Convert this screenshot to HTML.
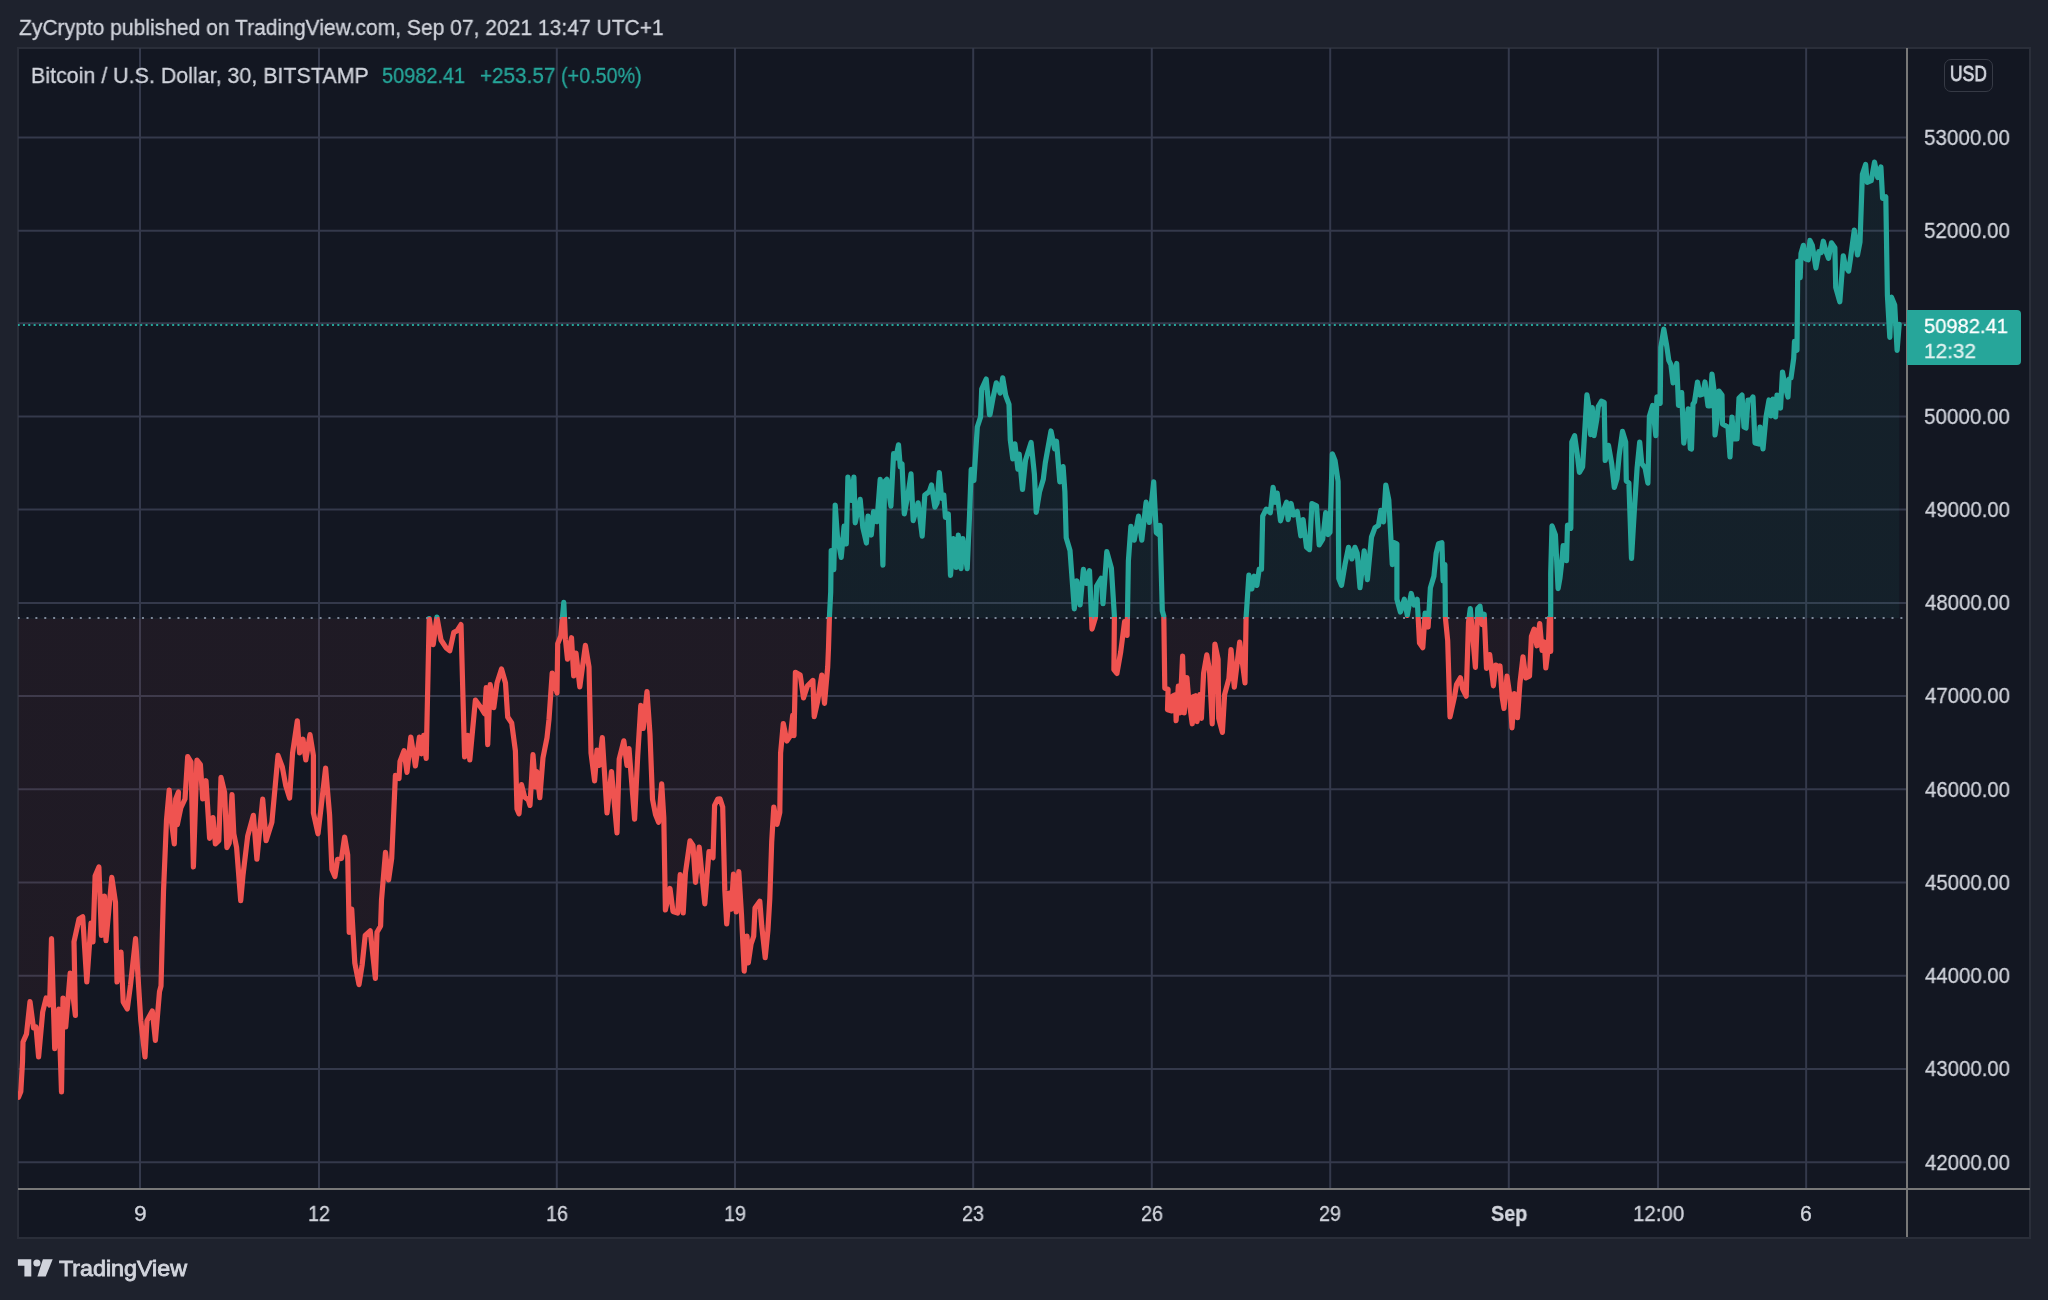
<!DOCTYPE html>
<html><head><meta charset="utf-8">
<style>
html,body{margin:0;padding:0;}
body{width:2048px;height:1300px;background:#1e222d;position:relative;overflow:hidden;font-family:"Liberation Sans",sans-serif;color:#d1d4dc;}
.t{position:absolute;line-height:1;white-space:pre;transform-origin:0 0;-webkit-text-stroke:0.3px currentColor;will-change:transform;}
.usd{position:absolute;left:1943.5px;top:59px;width:49px;height:33px;border:1.5px solid #363a45;border-radius:7px;box-sizing:border-box;}
.pbox{position:absolute;left:1907px;top:310px;width:114px;height:55px;background:#26a69a;border-radius:0 4px 4px 0;color:#fff;}
</style></head><body>
<svg width="2048" height="1300" style="position:absolute;left:0;top:0">
<defs>
<clipPath id="ctop"><rect x="18" y="48" width="1889" height="569.0"/></clipPath>
<clipPath id="cbot"><rect x="18" y="617.0" width="1889" height="571.0"/></clipPath>
<clipPath id="ftop"><rect x="18" y="48" width="1889" height="570.5"/></clipPath>
<clipPath id="fbot"><rect x="18" y="618.5" width="1889" height="569.5"/></clipPath>
<linearGradient id="gtop" x1="0" y1="48" x2="0" y2="618.0" gradientUnits="userSpaceOnUse">
<stop offset="0" stop-color="#26a69a" stop-opacity="0.07"/><stop offset="1" stop-color="#26a69a" stop-opacity="0.065"/></linearGradient>
<linearGradient id="gbot" x1="0" y1="618.0" x2="0" y2="1188" gradientUnits="userSpaceOnUse">
<stop offset="0" stop-color="#ef5350" stop-opacity="0.055"/><stop offset="1" stop-color="#ef5350" stop-opacity="0.06"/></linearGradient>
</defs>
<rect x="18" y="48" width="2012" height="1190" fill="#131722" stroke="#2a2e39" stroke-width="2"/>
<g stroke="#34394b" stroke-width="2" fill="none">
<line x1="140.0" y1="48" x2="140.0" y2="1188" />
<line x1="319.0" y1="48" x2="319.0" y2="1188" />
<line x1="556.8" y1="48" x2="556.8" y2="1188" />
<line x1="735.0" y1="48" x2="735.0" y2="1188" />
<line x1="973.2" y1="48" x2="973.2" y2="1188" />
<line x1="1151.8" y1="48" x2="1151.8" y2="1188" />
<line x1="1330.2" y1="48" x2="1330.2" y2="1188" />
<line x1="1508.8" y1="48" x2="1508.8" y2="1188" />
<line x1="1658.0" y1="48" x2="1658.0" y2="1188" />
<line x1="1806.15" y1="48" x2="1806.15" y2="1188" />
<line x1="18" y1="1162.2" x2="1907" y2="1162.2" />
<line x1="18" y1="1069.0" x2="1907" y2="1069.0" />
<line x1="18" y1="975.7" x2="1907" y2="975.7" />
<line x1="18" y1="882.6" x2="1907" y2="882.6" />
<line x1="18" y1="789.2" x2="1907" y2="789.2" />
<line x1="18" y1="696.0" x2="1907" y2="696.0" />
<line x1="18" y1="602.9" x2="1907" y2="602.9" />
<line x1="18" y1="509.6" x2="1907" y2="509.6" />
<line x1="18" y1="416.5" x2="1907" y2="416.5" />
<line x1="18" y1="323.3" x2="1907" y2="323.3" />
<line x1="18" y1="230.7" x2="1907" y2="230.7" />
<line x1="18" y1="137.6" x2="1907" y2="137.6" />
</g>
<path d="M18.5,1097.3 L20.8,1091.5 L22.5,1062.0 L23.0,1042.0 L26.5,1034.0 L30.0,1001.5 L33.5,1028.0 L36.0,1027.0 L38.6,1057.0 L42.7,1012.0 L46.1,998.0 L49.6,1005.0 L51.5,938.6 L54.7,1048.7 L58.8,1009.0 L61.5,1092.0 L63.0,998.0 L65.7,1027.0 L70.2,973.0 L75.4,1015.5 L74.0,941.8 L79.0,919.0 L82.7,916.8 L86.8,982.0 L91.0,923.0 L93.0,941.8 L95.1,876.0 L98.9,867.0 L101.4,935.5 L104.5,896.0 L106.0,940.7 L111.8,877.4 L115.5,902.3 L117.0,982.0 L121.0,952.0 L123.2,1002.0 L127.3,1009.0 L130.5,985.0 L135.6,938.6 L140.8,1020.7 L145.0,1057.0 L147.0,1020.7 L152.3,1011.0 L155.4,1040.4 L159.5,991.6 L161.0,986.0 L163.5,891.5 L166.5,820.0 L169.2,790.0 L171.5,822.0 L174.3,844.0 L175.7,799.0 L178.5,792.0 L177.3,824.6 L180.8,808.0 L185.0,799.0 L187.7,756.5 L191.0,762.0 L193.4,867.0 L196.9,760.0 L200.4,764.6 L202.7,799.0 L206.0,780.7 L209.6,838.4 L213.0,817.6 L215.4,844.0 L218.8,840.7 L221.0,777.3 L224.6,792.3 L226.9,847.6 L229.2,843.0 L232.0,794.6 L233.8,833.8 L236.6,847.6 L238.4,870.7 L240.7,900.7 L243.0,875.3 L247.7,836.0 L253.4,815.3 L256.9,859.2 L262.7,799.2 L266.1,840.7 L271.9,822.3 L278.0,755.4 L282.3,767.0 L285.7,785.4 L289.6,798.0 L292.6,753.0 L297.3,720.8 L299.6,753.0 L303.0,739.2 L305.8,760.0 L310.0,734.6 L313.4,755.4 L313.4,813.0 L318.0,833.8 L321.5,803.8 L325.6,768.0 L329.6,815.3 L331.9,869.5 L334.9,876.5 L337.6,859.2 L341.5,858.5 L344.6,837.0 L347.7,855.0 L349.2,932.3 L351.7,909.0 L354.8,963.0 L359.0,984.6 L362.2,964.6 L365.2,935.4 L370.2,930.8 L375.4,978.5 L377.0,932.3 L380.6,926.0 L381.5,900.0 L385.5,852.3 L388.6,880.0 L391.7,858.5 L395.4,775.4 L399.0,778.5 L400.0,761.5 L404.0,750.8 L407.0,772.3 L410.8,737.0 L415.4,766.0 L419.4,737.0 L421.5,753.8 L423.7,735.4 L426.2,758.5 L429.2,618.5 L433.2,644.6 L436.9,617.0 L441.0,640.0 L446.0,647.7 L449.8,650.8 L453.8,632.3 L457.0,630.8 L461.0,624.6 L463.0,698.5 L464.6,757.0 L467.7,735.4 L469.8,760.0 L475.4,700.0 L481.0,707.7 L484.6,713.8 L486.2,687.7 L487.7,744.6 L490.2,684.6 L493.8,707.7 L497.0,683.0 L501.5,669.0 L505.5,683.0 L507.7,717.0 L511.7,723.0 L515.4,750.8 L517.0,809.0 L519.0,813.8 L521.5,784.6 L524.6,797.0 L528.3,800.0 L530.0,805.4 L533.0,754.6 L535.5,787.0 L536.8,771.5 L539.8,797.7 L543.0,757.7 L547.0,737.7 L549.0,719.2 L552.2,673.0 L557.0,693.0 L557.7,643.8 L560.8,636.0 L563.8,602.3 L565.4,639.2 L567.5,659.2 L571.5,637.7 L573.7,676.0 L576.0,653.0 L579.8,687.0 L585.4,645.4 L589.0,667.0 L591.0,753.0 L594.6,780.8 L597.0,750.0 L599.2,765.4 L602.3,737.7 L607.0,813.0 L611.5,771.5 L617.0,833.0 L619.2,759.2 L623.8,740.8 L627.0,765.4 L629.0,748.5 L634.6,819.2 L637.7,756.0 L640.8,705.4 L643.2,728.5 L647.0,691.5 L650.0,734.6 L652.5,799.2 L655.5,814.6 L658.6,822.3 L661.7,783.8 L663.8,817.7 L665.4,910.0 L670.0,888.5 L673.0,911.5 L677.7,913.0 L680.2,874.6 L683.2,913.0 L685.4,873.0 L690.0,840.8 L693.0,845.4 L695.5,882.3 L699.2,847.0 L704.8,903.8 L709.0,851.5 L713.0,857.7 L714.6,805.4 L717.7,799.2 L720.0,798.9 L722.7,807.0 L724.8,890.4 L726.7,924.0 L729.4,893.0 L731.3,909.2 L733.5,874.2 L736.2,912.0 L738.8,871.6 L741.5,914.6 L744.2,971.2 L747.0,936.2 L748.3,963.0 L751.0,944.3 L753.7,936.2 L755.0,908.0 L759.8,901.2 L761.7,925.4 L765.2,957.7 L767.9,930.8 L769.8,898.5 L771.7,842.0 L773.8,807.0 L777.0,824.4 L779.8,812.3 L780.6,753.0 L783.3,723.5 L786.8,741.0 L790.5,735.6 L792.7,715.4 L794.0,735.6 L795.4,672.3 L800.2,675.0 L803.5,697.9 L807.5,685.8 L812.9,680.4 L814.2,716.7 L817.5,702.0 L821.8,675.0 L824.5,703.3 L827.7,667.0 L828.5,647.8 L829.4,617.6 L830.7,592.0 L831.2,550.7 L833.8,569.7 L835.2,505.0 L837.4,536.2 L841.2,557.4 L844.1,526.2 L846.3,544.0 L847.9,477.0 L851.2,500.5 L853.9,477.0 L855.2,522.8 L860.2,499.4 L862.8,527.3 L866.4,543.0 L868.0,516.1 L871.3,535.0 L873.5,511.7 L876.9,521.7 L880.2,479.3 L882.9,565.2 L884.7,481.6 L886.9,479.3 L890.9,506.1 L893.6,453.7 L895.8,458.1 L898.5,444.8 L900.3,467.0 L902.0,463.7 L904.3,514.0 L908.1,493.8 L911.0,473.8 L913.2,520.6 L918.1,502.8 L922.2,536.2 L924.8,495.0 L929.3,491.6 L931.5,485.0 L934.9,507.2 L937.1,502.8 L939.3,472.6 L941.6,498.3 L943.8,495.0 L945.4,517.3 L948.3,514.0 L950.5,575.3 L953.4,538.5 L956.1,567.5 L958.3,535.1 L961.0,568.6 L962.8,538.5 L967.2,568.6 L969.5,516.1 L971.2,469.3 L973.9,480.5 L977.3,427.0 L980.6,416.9 L981.7,389.0 L986.2,379.0 L989.5,414.7 L990.0,414.6 L993.0,398.0 L996.3,382.8 L1000.2,393.0 L1002.7,377.8 L1005.7,395.5 L1009.0,404.4 L1010.3,440.0 L1012.8,459.0 L1014.9,443.8 L1017.9,469.2 L1019.2,454.0 L1022.5,489.5 L1025.5,460.3 L1031.1,442.5 L1034.4,474.2 L1036.2,512.3 L1039.5,492.0 L1043.3,479.3 L1045.3,462.8 L1051.0,431.0 L1054.7,448.9 L1056.5,441.2 L1059.8,481.9 L1063.1,466.6 L1064.9,492.0 L1066.2,537.7 L1070.0,550.4 L1074.3,608.8 L1076.8,580.9 L1080.1,605.0 L1083.4,569.4 L1086.5,583.4 L1089.5,570.7 L1092.0,629.1 L1095.4,617.7 L1096.6,586.0 L1101.2,578.3 L1103.0,603.7 L1106.8,551.7 L1111.4,568.2 L1114.4,616.4 L1113.9,669.7 L1116.9,673.5 L1120.7,652.0 L1124.6,621.5 L1127.1,635.4 L1128.4,560.6 L1130.9,526.3 L1134.2,540.2 L1138.5,516.1 L1141.8,540.2 L1146.1,502.2 L1149.4,522.5 L1153.7,481.9 L1156.3,532.6 L1159.6,535.2 L1160.0,525.4 L1162.3,610.8 L1163.8,616.1 L1164.8,688.3 L1168.1,689.3 L1167.5,709.8 L1171.8,710.9 L1172.9,695.8 L1175.6,694.7 L1176.1,720.6 L1178.3,686.1 L1179.9,713.0 L1182.6,656.0 L1184.2,713.0 L1186.9,677.5 L1188.5,696.9 L1192.3,723.8 L1192.8,696.9 L1195.5,695.8 L1197.1,721.6 L1199.8,694.7 L1201.4,718.4 L1203.6,673.2 L1206.8,654.9 L1209.5,670.0 L1212.2,723.8 L1214.9,644.1 L1218.1,659.2 L1218.7,718.4 L1222.4,732.4 L1224.6,694.7 L1228.9,678.6 L1231.0,649.5 L1234.3,687.2 L1239.7,642.0 L1245.0,682.9 L1246.1,617.2 L1248.9,575.0 L1251.8,588.9 L1254.2,576.2 L1256.9,585.4 L1259.2,569.2 L1261.5,569.2 L1262.7,516.2 L1266.2,509.2 L1270.3,512.7 L1273.1,487.3 L1275.4,502.3 L1277.2,493.1 L1280.5,520.8 L1283.5,510.4 L1286.5,502.3 L1288.1,519.6 L1291.1,503.5 L1293.4,515.0 L1297.3,511.5 L1300.8,535.8 L1303.1,519.6 L1306.5,547.3 L1309.5,549.6 L1311.9,503.5 L1316.5,505.8 L1319.2,545.0 L1322.7,539.2 L1325.7,512.7 L1328.0,534.6 L1330.0,532.3 L1332.3,453.8 L1335.1,460.8 L1338.1,481.5 L1338.8,578.5 L1341.5,585.4 L1345.0,564.6 L1348.5,547.3 L1351.9,558.9 L1354.9,547.3 L1357.2,553.1 L1360.0,587.7 L1364.2,550.8 L1367.4,579.6 L1371.5,537.0 L1375.0,527.7 L1378.5,525.4 L1380.8,510.4 L1383.5,521.9 L1385.8,485.0 L1388.8,500.0 L1392.3,564.6 L1394.2,542.7 L1396.9,543.8 L1396.9,599.2 L1400.4,612.0 L1404.3,599.2 L1407.3,615.4 L1411.2,593.5 L1414.2,605.0 L1417.2,599.2 L1419.5,643.1 L1422.8,647.7 L1425.1,613.1 L1428.1,627.0 L1430.4,587.7 L1433.9,576.2 L1436.2,553.1 L1438.5,543.8 L1441.9,542.7 L1443.1,580.8 L1444.9,564.6 L1445.4,617.7 L1447.7,640.8 L1450.0,717.0 L1454.6,696.2 L1456.5,684.6 L1460.4,677.7 L1462.7,689.2 L1466.2,696.2 L1468.5,622.3 L1470.3,608.5 L1473.1,640.8 L1475.4,667.3 L1477.7,608.5 L1480.0,606.2 L1482.3,624.6 L1484.2,614.2 L1486.5,668.5 L1489.7,654.6 L1493.4,685.8 L1495.7,665.0 L1499.6,667.3 L1500.0,666.0 L1502.2,697.4 L1504.0,708.5 L1507.0,676.2 L1510.1,697.4 L1512.0,727.9 L1514.4,693.7 L1517.5,717.7 L1519.9,683.6 L1523.0,656.8 L1525.8,678.0 L1529.5,676.2 L1531.4,636.5 L1534.1,629.2 L1536.9,645.8 L1539.7,623.6 L1542.1,650.4 L1544.3,642.0 L1545.8,668.0 L1548.3,647.6 L1549.4,618.1 L1550.7,651.3 L1550.7,573.8 L1552.0,525.8 L1555.4,535.0 L1558.1,588.6 L1560.0,577.8 L1561.7,562.8 L1563.2,545.5 L1566.5,560.6 L1567.5,525.0 L1570.8,528.3 L1571.8,442.1 L1574.6,435.7 L1577.2,454.0 L1579.4,472.3 L1582.6,466.9 L1586.9,394.8 L1589.1,407.7 L1590.6,434.6 L1592.3,407.7 L1594.0,435.7 L1596.6,420.6 L1598.3,406.6 L1601.4,401.2 L1604.2,402.3 L1605.2,460.5 L1608.5,445.4 L1611.7,463.7 L1614.3,487.4 L1617.0,478.8 L1619.2,455.1 L1622.5,431.4 L1625.7,442.1 L1626.3,480.9 L1628.9,483.1 L1631.5,558.5 L1634.3,511.1 L1637.1,468.0 L1639.7,442.1 L1641.8,463.7 L1645.1,468.0 L1647.9,483.1 L1649.4,416.3 L1652.6,405.5 L1655.8,435.7 L1656.9,396.9 L1660.2,403.4 L1660.8,347.4 L1663.8,329.1 L1666.6,345.2 L1668.8,360.3 L1670.9,364.6 L1673.1,382.9 L1676.7,363.5 L1678.5,405.5 L1681.7,392.6 L1683.8,443.2 L1688.2,408.8 L1690.3,448.6 L1691.5,449.0 L1693.0,404.0 L1694.5,402.0 L1697.5,382.0 L1700.0,395.0 L1703.0,394.0 L1705.0,382.0 L1708.0,406.0 L1710.0,406.0 L1712.0,374.0 L1714.0,390.0 L1715.0,435.0 L1717.0,420.0 L1719.0,391.0 L1722.0,395.0 L1722.5,424.0 L1726.0,426.0 L1728.0,427.0 L1730.0,457.0 L1732.0,417.0 L1734.0,439.0 L1737.0,439.0 L1739.0,398.0 L1742.0,395.0 L1744.0,427.0 L1746.0,428.0 L1748.0,400.0 L1751.0,400.0 L1753.0,397.0 L1755.0,443.0 L1759.0,444.0 L1760.0,427.0 L1763.0,449.0 L1766.0,417.0 L1769.0,400.0 L1771.0,416.0 L1773.0,399.0 L1775.5,417.0 L1777.0,395.0 L1780.5,408.0 L1782.5,372.0 L1785.0,386.0 L1788.0,397.0 L1789.0,379.0 L1791.0,378.0 L1793.7,358.3 L1794.5,341.4 L1797.0,350.3 L1797.8,261.4 L1800.2,277.6 L1801.0,253.4 L1803.4,245.3 L1805.8,259.0 L1808.3,259.8 L1809.9,240.4 L1812.3,245.3 L1815.9,267.9 L1818.8,251.7 L1821.2,252.6 L1823.3,241.2 L1826.0,251.7 L1828.5,258.2 L1831.4,242.9 L1834.9,247.7 L1835.7,287.3 L1839.8,301.8 L1843.3,255.8 L1845.4,266.3 L1848.6,271.1 L1850.3,259.8 L1854.3,230.0 L1857.5,255.0 L1860.0,242.0 L1862.4,174.2 L1865.6,164.5 L1867.2,182.3 L1871.2,180.7 L1874.5,162.1 L1877.7,177.5 L1880.9,167.0 L1882.6,198.4 L1885.8,196.8 L1887.4,295.3 L1889.8,337.3 L1891.4,297.0 L1894.7,305.0 L1897.1,350.3 L1899.2,324.4 L1899.2,618.0 L18.5,618.0 Z" fill="url(#gtop)" clip-path="url(#ftop)"/>
<path d="M18.5,1097.3 L20.8,1091.5 L22.5,1062.0 L23.0,1042.0 L26.5,1034.0 L30.0,1001.5 L33.5,1028.0 L36.0,1027.0 L38.6,1057.0 L42.7,1012.0 L46.1,998.0 L49.6,1005.0 L51.5,938.6 L54.7,1048.7 L58.8,1009.0 L61.5,1092.0 L63.0,998.0 L65.7,1027.0 L70.2,973.0 L75.4,1015.5 L74.0,941.8 L79.0,919.0 L82.7,916.8 L86.8,982.0 L91.0,923.0 L93.0,941.8 L95.1,876.0 L98.9,867.0 L101.4,935.5 L104.5,896.0 L106.0,940.7 L111.8,877.4 L115.5,902.3 L117.0,982.0 L121.0,952.0 L123.2,1002.0 L127.3,1009.0 L130.5,985.0 L135.6,938.6 L140.8,1020.7 L145.0,1057.0 L147.0,1020.7 L152.3,1011.0 L155.4,1040.4 L159.5,991.6 L161.0,986.0 L163.5,891.5 L166.5,820.0 L169.2,790.0 L171.5,822.0 L174.3,844.0 L175.7,799.0 L178.5,792.0 L177.3,824.6 L180.8,808.0 L185.0,799.0 L187.7,756.5 L191.0,762.0 L193.4,867.0 L196.9,760.0 L200.4,764.6 L202.7,799.0 L206.0,780.7 L209.6,838.4 L213.0,817.6 L215.4,844.0 L218.8,840.7 L221.0,777.3 L224.6,792.3 L226.9,847.6 L229.2,843.0 L232.0,794.6 L233.8,833.8 L236.6,847.6 L238.4,870.7 L240.7,900.7 L243.0,875.3 L247.7,836.0 L253.4,815.3 L256.9,859.2 L262.7,799.2 L266.1,840.7 L271.9,822.3 L278.0,755.4 L282.3,767.0 L285.7,785.4 L289.6,798.0 L292.6,753.0 L297.3,720.8 L299.6,753.0 L303.0,739.2 L305.8,760.0 L310.0,734.6 L313.4,755.4 L313.4,813.0 L318.0,833.8 L321.5,803.8 L325.6,768.0 L329.6,815.3 L331.9,869.5 L334.9,876.5 L337.6,859.2 L341.5,858.5 L344.6,837.0 L347.7,855.0 L349.2,932.3 L351.7,909.0 L354.8,963.0 L359.0,984.6 L362.2,964.6 L365.2,935.4 L370.2,930.8 L375.4,978.5 L377.0,932.3 L380.6,926.0 L381.5,900.0 L385.5,852.3 L388.6,880.0 L391.7,858.5 L395.4,775.4 L399.0,778.5 L400.0,761.5 L404.0,750.8 L407.0,772.3 L410.8,737.0 L415.4,766.0 L419.4,737.0 L421.5,753.8 L423.7,735.4 L426.2,758.5 L429.2,618.5 L433.2,644.6 L436.9,617.0 L441.0,640.0 L446.0,647.7 L449.8,650.8 L453.8,632.3 L457.0,630.8 L461.0,624.6 L463.0,698.5 L464.6,757.0 L467.7,735.4 L469.8,760.0 L475.4,700.0 L481.0,707.7 L484.6,713.8 L486.2,687.7 L487.7,744.6 L490.2,684.6 L493.8,707.7 L497.0,683.0 L501.5,669.0 L505.5,683.0 L507.7,717.0 L511.7,723.0 L515.4,750.8 L517.0,809.0 L519.0,813.8 L521.5,784.6 L524.6,797.0 L528.3,800.0 L530.0,805.4 L533.0,754.6 L535.5,787.0 L536.8,771.5 L539.8,797.7 L543.0,757.7 L547.0,737.7 L549.0,719.2 L552.2,673.0 L557.0,693.0 L557.7,643.8 L560.8,636.0 L563.8,602.3 L565.4,639.2 L567.5,659.2 L571.5,637.7 L573.7,676.0 L576.0,653.0 L579.8,687.0 L585.4,645.4 L589.0,667.0 L591.0,753.0 L594.6,780.8 L597.0,750.0 L599.2,765.4 L602.3,737.7 L607.0,813.0 L611.5,771.5 L617.0,833.0 L619.2,759.2 L623.8,740.8 L627.0,765.4 L629.0,748.5 L634.6,819.2 L637.7,756.0 L640.8,705.4 L643.2,728.5 L647.0,691.5 L650.0,734.6 L652.5,799.2 L655.5,814.6 L658.6,822.3 L661.7,783.8 L663.8,817.7 L665.4,910.0 L670.0,888.5 L673.0,911.5 L677.7,913.0 L680.2,874.6 L683.2,913.0 L685.4,873.0 L690.0,840.8 L693.0,845.4 L695.5,882.3 L699.2,847.0 L704.8,903.8 L709.0,851.5 L713.0,857.7 L714.6,805.4 L717.7,799.2 L720.0,798.9 L722.7,807.0 L724.8,890.4 L726.7,924.0 L729.4,893.0 L731.3,909.2 L733.5,874.2 L736.2,912.0 L738.8,871.6 L741.5,914.6 L744.2,971.2 L747.0,936.2 L748.3,963.0 L751.0,944.3 L753.7,936.2 L755.0,908.0 L759.8,901.2 L761.7,925.4 L765.2,957.7 L767.9,930.8 L769.8,898.5 L771.7,842.0 L773.8,807.0 L777.0,824.4 L779.8,812.3 L780.6,753.0 L783.3,723.5 L786.8,741.0 L790.5,735.6 L792.7,715.4 L794.0,735.6 L795.4,672.3 L800.2,675.0 L803.5,697.9 L807.5,685.8 L812.9,680.4 L814.2,716.7 L817.5,702.0 L821.8,675.0 L824.5,703.3 L827.7,667.0 L828.5,647.8 L829.4,617.6 L830.7,592.0 L831.2,550.7 L833.8,569.7 L835.2,505.0 L837.4,536.2 L841.2,557.4 L844.1,526.2 L846.3,544.0 L847.9,477.0 L851.2,500.5 L853.9,477.0 L855.2,522.8 L860.2,499.4 L862.8,527.3 L866.4,543.0 L868.0,516.1 L871.3,535.0 L873.5,511.7 L876.9,521.7 L880.2,479.3 L882.9,565.2 L884.7,481.6 L886.9,479.3 L890.9,506.1 L893.6,453.7 L895.8,458.1 L898.5,444.8 L900.3,467.0 L902.0,463.7 L904.3,514.0 L908.1,493.8 L911.0,473.8 L913.2,520.6 L918.1,502.8 L922.2,536.2 L924.8,495.0 L929.3,491.6 L931.5,485.0 L934.9,507.2 L937.1,502.8 L939.3,472.6 L941.6,498.3 L943.8,495.0 L945.4,517.3 L948.3,514.0 L950.5,575.3 L953.4,538.5 L956.1,567.5 L958.3,535.1 L961.0,568.6 L962.8,538.5 L967.2,568.6 L969.5,516.1 L971.2,469.3 L973.9,480.5 L977.3,427.0 L980.6,416.9 L981.7,389.0 L986.2,379.0 L989.5,414.7 L990.0,414.6 L993.0,398.0 L996.3,382.8 L1000.2,393.0 L1002.7,377.8 L1005.7,395.5 L1009.0,404.4 L1010.3,440.0 L1012.8,459.0 L1014.9,443.8 L1017.9,469.2 L1019.2,454.0 L1022.5,489.5 L1025.5,460.3 L1031.1,442.5 L1034.4,474.2 L1036.2,512.3 L1039.5,492.0 L1043.3,479.3 L1045.3,462.8 L1051.0,431.0 L1054.7,448.9 L1056.5,441.2 L1059.8,481.9 L1063.1,466.6 L1064.9,492.0 L1066.2,537.7 L1070.0,550.4 L1074.3,608.8 L1076.8,580.9 L1080.1,605.0 L1083.4,569.4 L1086.5,583.4 L1089.5,570.7 L1092.0,629.1 L1095.4,617.7 L1096.6,586.0 L1101.2,578.3 L1103.0,603.7 L1106.8,551.7 L1111.4,568.2 L1114.4,616.4 L1113.9,669.7 L1116.9,673.5 L1120.7,652.0 L1124.6,621.5 L1127.1,635.4 L1128.4,560.6 L1130.9,526.3 L1134.2,540.2 L1138.5,516.1 L1141.8,540.2 L1146.1,502.2 L1149.4,522.5 L1153.7,481.9 L1156.3,532.6 L1159.6,535.2 L1160.0,525.4 L1162.3,610.8 L1163.8,616.1 L1164.8,688.3 L1168.1,689.3 L1167.5,709.8 L1171.8,710.9 L1172.9,695.8 L1175.6,694.7 L1176.1,720.6 L1178.3,686.1 L1179.9,713.0 L1182.6,656.0 L1184.2,713.0 L1186.9,677.5 L1188.5,696.9 L1192.3,723.8 L1192.8,696.9 L1195.5,695.8 L1197.1,721.6 L1199.8,694.7 L1201.4,718.4 L1203.6,673.2 L1206.8,654.9 L1209.5,670.0 L1212.2,723.8 L1214.9,644.1 L1218.1,659.2 L1218.7,718.4 L1222.4,732.4 L1224.6,694.7 L1228.9,678.6 L1231.0,649.5 L1234.3,687.2 L1239.7,642.0 L1245.0,682.9 L1246.1,617.2 L1248.9,575.0 L1251.8,588.9 L1254.2,576.2 L1256.9,585.4 L1259.2,569.2 L1261.5,569.2 L1262.7,516.2 L1266.2,509.2 L1270.3,512.7 L1273.1,487.3 L1275.4,502.3 L1277.2,493.1 L1280.5,520.8 L1283.5,510.4 L1286.5,502.3 L1288.1,519.6 L1291.1,503.5 L1293.4,515.0 L1297.3,511.5 L1300.8,535.8 L1303.1,519.6 L1306.5,547.3 L1309.5,549.6 L1311.9,503.5 L1316.5,505.8 L1319.2,545.0 L1322.7,539.2 L1325.7,512.7 L1328.0,534.6 L1330.0,532.3 L1332.3,453.8 L1335.1,460.8 L1338.1,481.5 L1338.8,578.5 L1341.5,585.4 L1345.0,564.6 L1348.5,547.3 L1351.9,558.9 L1354.9,547.3 L1357.2,553.1 L1360.0,587.7 L1364.2,550.8 L1367.4,579.6 L1371.5,537.0 L1375.0,527.7 L1378.5,525.4 L1380.8,510.4 L1383.5,521.9 L1385.8,485.0 L1388.8,500.0 L1392.3,564.6 L1394.2,542.7 L1396.9,543.8 L1396.9,599.2 L1400.4,612.0 L1404.3,599.2 L1407.3,615.4 L1411.2,593.5 L1414.2,605.0 L1417.2,599.2 L1419.5,643.1 L1422.8,647.7 L1425.1,613.1 L1428.1,627.0 L1430.4,587.7 L1433.9,576.2 L1436.2,553.1 L1438.5,543.8 L1441.9,542.7 L1443.1,580.8 L1444.9,564.6 L1445.4,617.7 L1447.7,640.8 L1450.0,717.0 L1454.6,696.2 L1456.5,684.6 L1460.4,677.7 L1462.7,689.2 L1466.2,696.2 L1468.5,622.3 L1470.3,608.5 L1473.1,640.8 L1475.4,667.3 L1477.7,608.5 L1480.0,606.2 L1482.3,624.6 L1484.2,614.2 L1486.5,668.5 L1489.7,654.6 L1493.4,685.8 L1495.7,665.0 L1499.6,667.3 L1500.0,666.0 L1502.2,697.4 L1504.0,708.5 L1507.0,676.2 L1510.1,697.4 L1512.0,727.9 L1514.4,693.7 L1517.5,717.7 L1519.9,683.6 L1523.0,656.8 L1525.8,678.0 L1529.5,676.2 L1531.4,636.5 L1534.1,629.2 L1536.9,645.8 L1539.7,623.6 L1542.1,650.4 L1544.3,642.0 L1545.8,668.0 L1548.3,647.6 L1549.4,618.1 L1550.7,651.3 L1550.7,573.8 L1552.0,525.8 L1555.4,535.0 L1558.1,588.6 L1560.0,577.8 L1561.7,562.8 L1563.2,545.5 L1566.5,560.6 L1567.5,525.0 L1570.8,528.3 L1571.8,442.1 L1574.6,435.7 L1577.2,454.0 L1579.4,472.3 L1582.6,466.9 L1586.9,394.8 L1589.1,407.7 L1590.6,434.6 L1592.3,407.7 L1594.0,435.7 L1596.6,420.6 L1598.3,406.6 L1601.4,401.2 L1604.2,402.3 L1605.2,460.5 L1608.5,445.4 L1611.7,463.7 L1614.3,487.4 L1617.0,478.8 L1619.2,455.1 L1622.5,431.4 L1625.7,442.1 L1626.3,480.9 L1628.9,483.1 L1631.5,558.5 L1634.3,511.1 L1637.1,468.0 L1639.7,442.1 L1641.8,463.7 L1645.1,468.0 L1647.9,483.1 L1649.4,416.3 L1652.6,405.5 L1655.8,435.7 L1656.9,396.9 L1660.2,403.4 L1660.8,347.4 L1663.8,329.1 L1666.6,345.2 L1668.8,360.3 L1670.9,364.6 L1673.1,382.9 L1676.7,363.5 L1678.5,405.5 L1681.7,392.6 L1683.8,443.2 L1688.2,408.8 L1690.3,448.6 L1691.5,449.0 L1693.0,404.0 L1694.5,402.0 L1697.5,382.0 L1700.0,395.0 L1703.0,394.0 L1705.0,382.0 L1708.0,406.0 L1710.0,406.0 L1712.0,374.0 L1714.0,390.0 L1715.0,435.0 L1717.0,420.0 L1719.0,391.0 L1722.0,395.0 L1722.5,424.0 L1726.0,426.0 L1728.0,427.0 L1730.0,457.0 L1732.0,417.0 L1734.0,439.0 L1737.0,439.0 L1739.0,398.0 L1742.0,395.0 L1744.0,427.0 L1746.0,428.0 L1748.0,400.0 L1751.0,400.0 L1753.0,397.0 L1755.0,443.0 L1759.0,444.0 L1760.0,427.0 L1763.0,449.0 L1766.0,417.0 L1769.0,400.0 L1771.0,416.0 L1773.0,399.0 L1775.5,417.0 L1777.0,395.0 L1780.5,408.0 L1782.5,372.0 L1785.0,386.0 L1788.0,397.0 L1789.0,379.0 L1791.0,378.0 L1793.7,358.3 L1794.5,341.4 L1797.0,350.3 L1797.8,261.4 L1800.2,277.6 L1801.0,253.4 L1803.4,245.3 L1805.8,259.0 L1808.3,259.8 L1809.9,240.4 L1812.3,245.3 L1815.9,267.9 L1818.8,251.7 L1821.2,252.6 L1823.3,241.2 L1826.0,251.7 L1828.5,258.2 L1831.4,242.9 L1834.9,247.7 L1835.7,287.3 L1839.8,301.8 L1843.3,255.8 L1845.4,266.3 L1848.6,271.1 L1850.3,259.8 L1854.3,230.0 L1857.5,255.0 L1860.0,242.0 L1862.4,174.2 L1865.6,164.5 L1867.2,182.3 L1871.2,180.7 L1874.5,162.1 L1877.7,177.5 L1880.9,167.0 L1882.6,198.4 L1885.8,196.8 L1887.4,295.3 L1889.8,337.3 L1891.4,297.0 L1894.7,305.0 L1897.1,350.3 L1899.2,324.4 L1899.2,618.0 L18.5,618.0 Z" fill="url(#gbot)" clip-path="url(#fbot)"/>
<g fill="none" stroke-width="5.2" stroke-linejoin="round" stroke-linecap="round">
<path d="M18.5,1097.3 L20.8,1091.5 L22.5,1062.0 L23.0,1042.0 L26.5,1034.0 L30.0,1001.5 L33.5,1028.0 L36.0,1027.0 L38.6,1057.0 L42.7,1012.0 L46.1,998.0 L49.6,1005.0 L51.5,938.6 L54.7,1048.7 L58.8,1009.0 L61.5,1092.0 L63.0,998.0 L65.7,1027.0 L70.2,973.0 L75.4,1015.5 L74.0,941.8 L79.0,919.0 L82.7,916.8 L86.8,982.0 L91.0,923.0 L93.0,941.8 L95.1,876.0 L98.9,867.0 L101.4,935.5 L104.5,896.0 L106.0,940.7 L111.8,877.4 L115.5,902.3 L117.0,982.0 L121.0,952.0 L123.2,1002.0 L127.3,1009.0 L130.5,985.0 L135.6,938.6 L140.8,1020.7 L145.0,1057.0 L147.0,1020.7 L152.3,1011.0 L155.4,1040.4 L159.5,991.6 L161.0,986.0 L163.5,891.5 L166.5,820.0 L169.2,790.0 L171.5,822.0 L174.3,844.0 L175.7,799.0 L178.5,792.0 L177.3,824.6 L180.8,808.0 L185.0,799.0 L187.7,756.5 L191.0,762.0 L193.4,867.0 L196.9,760.0 L200.4,764.6 L202.7,799.0 L206.0,780.7 L209.6,838.4 L213.0,817.6 L215.4,844.0 L218.8,840.7 L221.0,777.3 L224.6,792.3 L226.9,847.6 L229.2,843.0 L232.0,794.6 L233.8,833.8 L236.6,847.6 L238.4,870.7 L240.7,900.7 L243.0,875.3 L247.7,836.0 L253.4,815.3 L256.9,859.2 L262.7,799.2 L266.1,840.7 L271.9,822.3 L278.0,755.4 L282.3,767.0 L285.7,785.4 L289.6,798.0 L292.6,753.0 L297.3,720.8 L299.6,753.0 L303.0,739.2 L305.8,760.0 L310.0,734.6 L313.4,755.4 L313.4,813.0 L318.0,833.8 L321.5,803.8 L325.6,768.0 L329.6,815.3 L331.9,869.5 L334.9,876.5 L337.6,859.2 L341.5,858.5 L344.6,837.0 L347.7,855.0 L349.2,932.3 L351.7,909.0 L354.8,963.0 L359.0,984.6 L362.2,964.6 L365.2,935.4 L370.2,930.8 L375.4,978.5 L377.0,932.3 L380.6,926.0 L381.5,900.0 L385.5,852.3 L388.6,880.0 L391.7,858.5 L395.4,775.4 L399.0,778.5 L400.0,761.5 L404.0,750.8 L407.0,772.3 L410.8,737.0 L415.4,766.0 L419.4,737.0 L421.5,753.8 L423.7,735.4 L426.2,758.5 L429.2,618.5 L433.2,644.6 L436.9,617.0 L441.0,640.0 L446.0,647.7 L449.8,650.8 L453.8,632.3 L457.0,630.8 L461.0,624.6 L463.0,698.5 L464.6,757.0 L467.7,735.4 L469.8,760.0 L475.4,700.0 L481.0,707.7 L484.6,713.8 L486.2,687.7 L487.7,744.6 L490.2,684.6 L493.8,707.7 L497.0,683.0 L501.5,669.0 L505.5,683.0 L507.7,717.0 L511.7,723.0 L515.4,750.8 L517.0,809.0 L519.0,813.8 L521.5,784.6 L524.6,797.0 L528.3,800.0 L530.0,805.4 L533.0,754.6 L535.5,787.0 L536.8,771.5 L539.8,797.7 L543.0,757.7 L547.0,737.7 L549.0,719.2 L552.2,673.0 L557.0,693.0 L557.7,643.8 L560.8,636.0 L563.8,602.3 L565.4,639.2 L567.5,659.2 L571.5,637.7 L573.7,676.0 L576.0,653.0 L579.8,687.0 L585.4,645.4 L589.0,667.0 L591.0,753.0 L594.6,780.8 L597.0,750.0 L599.2,765.4 L602.3,737.7 L607.0,813.0 L611.5,771.5 L617.0,833.0 L619.2,759.2 L623.8,740.8 L627.0,765.4 L629.0,748.5 L634.6,819.2 L637.7,756.0 L640.8,705.4 L643.2,728.5 L647.0,691.5 L650.0,734.6 L652.5,799.2 L655.5,814.6 L658.6,822.3 L661.7,783.8 L663.8,817.7 L665.4,910.0 L670.0,888.5 L673.0,911.5 L677.7,913.0 L680.2,874.6 L683.2,913.0 L685.4,873.0 L690.0,840.8 L693.0,845.4 L695.5,882.3 L699.2,847.0 L704.8,903.8 L709.0,851.5 L713.0,857.7 L714.6,805.4 L717.7,799.2 L720.0,798.9 L722.7,807.0 L724.8,890.4 L726.7,924.0 L729.4,893.0 L731.3,909.2 L733.5,874.2 L736.2,912.0 L738.8,871.6 L741.5,914.6 L744.2,971.2 L747.0,936.2 L748.3,963.0 L751.0,944.3 L753.7,936.2 L755.0,908.0 L759.8,901.2 L761.7,925.4 L765.2,957.7 L767.9,930.8 L769.8,898.5 L771.7,842.0 L773.8,807.0 L777.0,824.4 L779.8,812.3 L780.6,753.0 L783.3,723.5 L786.8,741.0 L790.5,735.6 L792.7,715.4 L794.0,735.6 L795.4,672.3 L800.2,675.0 L803.5,697.9 L807.5,685.8 L812.9,680.4 L814.2,716.7 L817.5,702.0 L821.8,675.0 L824.5,703.3 L827.7,667.0 L828.5,647.8 L829.4,617.6 L830.7,592.0 L831.2,550.7 L833.8,569.7 L835.2,505.0 L837.4,536.2 L841.2,557.4 L844.1,526.2 L846.3,544.0 L847.9,477.0 L851.2,500.5 L853.9,477.0 L855.2,522.8 L860.2,499.4 L862.8,527.3 L866.4,543.0 L868.0,516.1 L871.3,535.0 L873.5,511.7 L876.9,521.7 L880.2,479.3 L882.9,565.2 L884.7,481.6 L886.9,479.3 L890.9,506.1 L893.6,453.7 L895.8,458.1 L898.5,444.8 L900.3,467.0 L902.0,463.7 L904.3,514.0 L908.1,493.8 L911.0,473.8 L913.2,520.6 L918.1,502.8 L922.2,536.2 L924.8,495.0 L929.3,491.6 L931.5,485.0 L934.9,507.2 L937.1,502.8 L939.3,472.6 L941.6,498.3 L943.8,495.0 L945.4,517.3 L948.3,514.0 L950.5,575.3 L953.4,538.5 L956.1,567.5 L958.3,535.1 L961.0,568.6 L962.8,538.5 L967.2,568.6 L969.5,516.1 L971.2,469.3 L973.9,480.5 L977.3,427.0 L980.6,416.9 L981.7,389.0 L986.2,379.0 L989.5,414.7 L990.0,414.6 L993.0,398.0 L996.3,382.8 L1000.2,393.0 L1002.7,377.8 L1005.7,395.5 L1009.0,404.4 L1010.3,440.0 L1012.8,459.0 L1014.9,443.8 L1017.9,469.2 L1019.2,454.0 L1022.5,489.5 L1025.5,460.3 L1031.1,442.5 L1034.4,474.2 L1036.2,512.3 L1039.5,492.0 L1043.3,479.3 L1045.3,462.8 L1051.0,431.0 L1054.7,448.9 L1056.5,441.2 L1059.8,481.9 L1063.1,466.6 L1064.9,492.0 L1066.2,537.7 L1070.0,550.4 L1074.3,608.8 L1076.8,580.9 L1080.1,605.0 L1083.4,569.4 L1086.5,583.4 L1089.5,570.7 L1092.0,629.1 L1095.4,617.7 L1096.6,586.0 L1101.2,578.3 L1103.0,603.7 L1106.8,551.7 L1111.4,568.2 L1114.4,616.4 L1113.9,669.7 L1116.9,673.5 L1120.7,652.0 L1124.6,621.5 L1127.1,635.4 L1128.4,560.6 L1130.9,526.3 L1134.2,540.2 L1138.5,516.1 L1141.8,540.2 L1146.1,502.2 L1149.4,522.5 L1153.7,481.9 L1156.3,532.6 L1159.6,535.2 L1160.0,525.4 L1162.3,610.8 L1163.8,616.1 L1164.8,688.3 L1168.1,689.3 L1167.5,709.8 L1171.8,710.9 L1172.9,695.8 L1175.6,694.7 L1176.1,720.6 L1178.3,686.1 L1179.9,713.0 L1182.6,656.0 L1184.2,713.0 L1186.9,677.5 L1188.5,696.9 L1192.3,723.8 L1192.8,696.9 L1195.5,695.8 L1197.1,721.6 L1199.8,694.7 L1201.4,718.4 L1203.6,673.2 L1206.8,654.9 L1209.5,670.0 L1212.2,723.8 L1214.9,644.1 L1218.1,659.2 L1218.7,718.4 L1222.4,732.4 L1224.6,694.7 L1228.9,678.6 L1231.0,649.5 L1234.3,687.2 L1239.7,642.0 L1245.0,682.9 L1246.1,617.2 L1248.9,575.0 L1251.8,588.9 L1254.2,576.2 L1256.9,585.4 L1259.2,569.2 L1261.5,569.2 L1262.7,516.2 L1266.2,509.2 L1270.3,512.7 L1273.1,487.3 L1275.4,502.3 L1277.2,493.1 L1280.5,520.8 L1283.5,510.4 L1286.5,502.3 L1288.1,519.6 L1291.1,503.5 L1293.4,515.0 L1297.3,511.5 L1300.8,535.8 L1303.1,519.6 L1306.5,547.3 L1309.5,549.6 L1311.9,503.5 L1316.5,505.8 L1319.2,545.0 L1322.7,539.2 L1325.7,512.7 L1328.0,534.6 L1330.0,532.3 L1332.3,453.8 L1335.1,460.8 L1338.1,481.5 L1338.8,578.5 L1341.5,585.4 L1345.0,564.6 L1348.5,547.3 L1351.9,558.9 L1354.9,547.3 L1357.2,553.1 L1360.0,587.7 L1364.2,550.8 L1367.4,579.6 L1371.5,537.0 L1375.0,527.7 L1378.5,525.4 L1380.8,510.4 L1383.5,521.9 L1385.8,485.0 L1388.8,500.0 L1392.3,564.6 L1394.2,542.7 L1396.9,543.8 L1396.9,599.2 L1400.4,612.0 L1404.3,599.2 L1407.3,615.4 L1411.2,593.5 L1414.2,605.0 L1417.2,599.2 L1419.5,643.1 L1422.8,647.7 L1425.1,613.1 L1428.1,627.0 L1430.4,587.7 L1433.9,576.2 L1436.2,553.1 L1438.5,543.8 L1441.9,542.7 L1443.1,580.8 L1444.9,564.6 L1445.4,617.7 L1447.7,640.8 L1450.0,717.0 L1454.6,696.2 L1456.5,684.6 L1460.4,677.7 L1462.7,689.2 L1466.2,696.2 L1468.5,622.3 L1470.3,608.5 L1473.1,640.8 L1475.4,667.3 L1477.7,608.5 L1480.0,606.2 L1482.3,624.6 L1484.2,614.2 L1486.5,668.5 L1489.7,654.6 L1493.4,685.8 L1495.7,665.0 L1499.6,667.3 L1500.0,666.0 L1502.2,697.4 L1504.0,708.5 L1507.0,676.2 L1510.1,697.4 L1512.0,727.9 L1514.4,693.7 L1517.5,717.7 L1519.9,683.6 L1523.0,656.8 L1525.8,678.0 L1529.5,676.2 L1531.4,636.5 L1534.1,629.2 L1536.9,645.8 L1539.7,623.6 L1542.1,650.4 L1544.3,642.0 L1545.8,668.0 L1548.3,647.6 L1549.4,618.1 L1550.7,651.3 L1550.7,573.8 L1552.0,525.8 L1555.4,535.0 L1558.1,588.6 L1560.0,577.8 L1561.7,562.8 L1563.2,545.5 L1566.5,560.6 L1567.5,525.0 L1570.8,528.3 L1571.8,442.1 L1574.6,435.7 L1577.2,454.0 L1579.4,472.3 L1582.6,466.9 L1586.9,394.8 L1589.1,407.7 L1590.6,434.6 L1592.3,407.7 L1594.0,435.7 L1596.6,420.6 L1598.3,406.6 L1601.4,401.2 L1604.2,402.3 L1605.2,460.5 L1608.5,445.4 L1611.7,463.7 L1614.3,487.4 L1617.0,478.8 L1619.2,455.1 L1622.5,431.4 L1625.7,442.1 L1626.3,480.9 L1628.9,483.1 L1631.5,558.5 L1634.3,511.1 L1637.1,468.0 L1639.7,442.1 L1641.8,463.7 L1645.1,468.0 L1647.9,483.1 L1649.4,416.3 L1652.6,405.5 L1655.8,435.7 L1656.9,396.9 L1660.2,403.4 L1660.8,347.4 L1663.8,329.1 L1666.6,345.2 L1668.8,360.3 L1670.9,364.6 L1673.1,382.9 L1676.7,363.5 L1678.5,405.5 L1681.7,392.6 L1683.8,443.2 L1688.2,408.8 L1690.3,448.6 L1691.5,449.0 L1693.0,404.0 L1694.5,402.0 L1697.5,382.0 L1700.0,395.0 L1703.0,394.0 L1705.0,382.0 L1708.0,406.0 L1710.0,406.0 L1712.0,374.0 L1714.0,390.0 L1715.0,435.0 L1717.0,420.0 L1719.0,391.0 L1722.0,395.0 L1722.5,424.0 L1726.0,426.0 L1728.0,427.0 L1730.0,457.0 L1732.0,417.0 L1734.0,439.0 L1737.0,439.0 L1739.0,398.0 L1742.0,395.0 L1744.0,427.0 L1746.0,428.0 L1748.0,400.0 L1751.0,400.0 L1753.0,397.0 L1755.0,443.0 L1759.0,444.0 L1760.0,427.0 L1763.0,449.0 L1766.0,417.0 L1769.0,400.0 L1771.0,416.0 L1773.0,399.0 L1775.5,417.0 L1777.0,395.0 L1780.5,408.0 L1782.5,372.0 L1785.0,386.0 L1788.0,397.0 L1789.0,379.0 L1791.0,378.0 L1793.7,358.3 L1794.5,341.4 L1797.0,350.3 L1797.8,261.4 L1800.2,277.6 L1801.0,253.4 L1803.4,245.3 L1805.8,259.0 L1808.3,259.8 L1809.9,240.4 L1812.3,245.3 L1815.9,267.9 L1818.8,251.7 L1821.2,252.6 L1823.3,241.2 L1826.0,251.7 L1828.5,258.2 L1831.4,242.9 L1834.9,247.7 L1835.7,287.3 L1839.8,301.8 L1843.3,255.8 L1845.4,266.3 L1848.6,271.1 L1850.3,259.8 L1854.3,230.0 L1857.5,255.0 L1860.0,242.0 L1862.4,174.2 L1865.6,164.5 L1867.2,182.3 L1871.2,180.7 L1874.5,162.1 L1877.7,177.5 L1880.9,167.0 L1882.6,198.4 L1885.8,196.8 L1887.4,295.3 L1889.8,337.3 L1891.4,297.0 L1894.7,305.0 L1897.1,350.3 L1899.2,324.4" stroke="#26a69a" clip-path="url(#ctop)"/>
<path d="M18.5,1097.3 L20.8,1091.5 L22.5,1062.0 L23.0,1042.0 L26.5,1034.0 L30.0,1001.5 L33.5,1028.0 L36.0,1027.0 L38.6,1057.0 L42.7,1012.0 L46.1,998.0 L49.6,1005.0 L51.5,938.6 L54.7,1048.7 L58.8,1009.0 L61.5,1092.0 L63.0,998.0 L65.7,1027.0 L70.2,973.0 L75.4,1015.5 L74.0,941.8 L79.0,919.0 L82.7,916.8 L86.8,982.0 L91.0,923.0 L93.0,941.8 L95.1,876.0 L98.9,867.0 L101.4,935.5 L104.5,896.0 L106.0,940.7 L111.8,877.4 L115.5,902.3 L117.0,982.0 L121.0,952.0 L123.2,1002.0 L127.3,1009.0 L130.5,985.0 L135.6,938.6 L140.8,1020.7 L145.0,1057.0 L147.0,1020.7 L152.3,1011.0 L155.4,1040.4 L159.5,991.6 L161.0,986.0 L163.5,891.5 L166.5,820.0 L169.2,790.0 L171.5,822.0 L174.3,844.0 L175.7,799.0 L178.5,792.0 L177.3,824.6 L180.8,808.0 L185.0,799.0 L187.7,756.5 L191.0,762.0 L193.4,867.0 L196.9,760.0 L200.4,764.6 L202.7,799.0 L206.0,780.7 L209.6,838.4 L213.0,817.6 L215.4,844.0 L218.8,840.7 L221.0,777.3 L224.6,792.3 L226.9,847.6 L229.2,843.0 L232.0,794.6 L233.8,833.8 L236.6,847.6 L238.4,870.7 L240.7,900.7 L243.0,875.3 L247.7,836.0 L253.4,815.3 L256.9,859.2 L262.7,799.2 L266.1,840.7 L271.9,822.3 L278.0,755.4 L282.3,767.0 L285.7,785.4 L289.6,798.0 L292.6,753.0 L297.3,720.8 L299.6,753.0 L303.0,739.2 L305.8,760.0 L310.0,734.6 L313.4,755.4 L313.4,813.0 L318.0,833.8 L321.5,803.8 L325.6,768.0 L329.6,815.3 L331.9,869.5 L334.9,876.5 L337.6,859.2 L341.5,858.5 L344.6,837.0 L347.7,855.0 L349.2,932.3 L351.7,909.0 L354.8,963.0 L359.0,984.6 L362.2,964.6 L365.2,935.4 L370.2,930.8 L375.4,978.5 L377.0,932.3 L380.6,926.0 L381.5,900.0 L385.5,852.3 L388.6,880.0 L391.7,858.5 L395.4,775.4 L399.0,778.5 L400.0,761.5 L404.0,750.8 L407.0,772.3 L410.8,737.0 L415.4,766.0 L419.4,737.0 L421.5,753.8 L423.7,735.4 L426.2,758.5 L429.2,618.5 L433.2,644.6 L436.9,617.0 L441.0,640.0 L446.0,647.7 L449.8,650.8 L453.8,632.3 L457.0,630.8 L461.0,624.6 L463.0,698.5 L464.6,757.0 L467.7,735.4 L469.8,760.0 L475.4,700.0 L481.0,707.7 L484.6,713.8 L486.2,687.7 L487.7,744.6 L490.2,684.6 L493.8,707.7 L497.0,683.0 L501.5,669.0 L505.5,683.0 L507.7,717.0 L511.7,723.0 L515.4,750.8 L517.0,809.0 L519.0,813.8 L521.5,784.6 L524.6,797.0 L528.3,800.0 L530.0,805.4 L533.0,754.6 L535.5,787.0 L536.8,771.5 L539.8,797.7 L543.0,757.7 L547.0,737.7 L549.0,719.2 L552.2,673.0 L557.0,693.0 L557.7,643.8 L560.8,636.0 L563.8,602.3 L565.4,639.2 L567.5,659.2 L571.5,637.7 L573.7,676.0 L576.0,653.0 L579.8,687.0 L585.4,645.4 L589.0,667.0 L591.0,753.0 L594.6,780.8 L597.0,750.0 L599.2,765.4 L602.3,737.7 L607.0,813.0 L611.5,771.5 L617.0,833.0 L619.2,759.2 L623.8,740.8 L627.0,765.4 L629.0,748.5 L634.6,819.2 L637.7,756.0 L640.8,705.4 L643.2,728.5 L647.0,691.5 L650.0,734.6 L652.5,799.2 L655.5,814.6 L658.6,822.3 L661.7,783.8 L663.8,817.7 L665.4,910.0 L670.0,888.5 L673.0,911.5 L677.7,913.0 L680.2,874.6 L683.2,913.0 L685.4,873.0 L690.0,840.8 L693.0,845.4 L695.5,882.3 L699.2,847.0 L704.8,903.8 L709.0,851.5 L713.0,857.7 L714.6,805.4 L717.7,799.2 L720.0,798.9 L722.7,807.0 L724.8,890.4 L726.7,924.0 L729.4,893.0 L731.3,909.2 L733.5,874.2 L736.2,912.0 L738.8,871.6 L741.5,914.6 L744.2,971.2 L747.0,936.2 L748.3,963.0 L751.0,944.3 L753.7,936.2 L755.0,908.0 L759.8,901.2 L761.7,925.4 L765.2,957.7 L767.9,930.8 L769.8,898.5 L771.7,842.0 L773.8,807.0 L777.0,824.4 L779.8,812.3 L780.6,753.0 L783.3,723.5 L786.8,741.0 L790.5,735.6 L792.7,715.4 L794.0,735.6 L795.4,672.3 L800.2,675.0 L803.5,697.9 L807.5,685.8 L812.9,680.4 L814.2,716.7 L817.5,702.0 L821.8,675.0 L824.5,703.3 L827.7,667.0 L828.5,647.8 L829.4,617.6 L830.7,592.0 L831.2,550.7 L833.8,569.7 L835.2,505.0 L837.4,536.2 L841.2,557.4 L844.1,526.2 L846.3,544.0 L847.9,477.0 L851.2,500.5 L853.9,477.0 L855.2,522.8 L860.2,499.4 L862.8,527.3 L866.4,543.0 L868.0,516.1 L871.3,535.0 L873.5,511.7 L876.9,521.7 L880.2,479.3 L882.9,565.2 L884.7,481.6 L886.9,479.3 L890.9,506.1 L893.6,453.7 L895.8,458.1 L898.5,444.8 L900.3,467.0 L902.0,463.7 L904.3,514.0 L908.1,493.8 L911.0,473.8 L913.2,520.6 L918.1,502.8 L922.2,536.2 L924.8,495.0 L929.3,491.6 L931.5,485.0 L934.9,507.2 L937.1,502.8 L939.3,472.6 L941.6,498.3 L943.8,495.0 L945.4,517.3 L948.3,514.0 L950.5,575.3 L953.4,538.5 L956.1,567.5 L958.3,535.1 L961.0,568.6 L962.8,538.5 L967.2,568.6 L969.5,516.1 L971.2,469.3 L973.9,480.5 L977.3,427.0 L980.6,416.9 L981.7,389.0 L986.2,379.0 L989.5,414.7 L990.0,414.6 L993.0,398.0 L996.3,382.8 L1000.2,393.0 L1002.7,377.8 L1005.7,395.5 L1009.0,404.4 L1010.3,440.0 L1012.8,459.0 L1014.9,443.8 L1017.9,469.2 L1019.2,454.0 L1022.5,489.5 L1025.5,460.3 L1031.1,442.5 L1034.4,474.2 L1036.2,512.3 L1039.5,492.0 L1043.3,479.3 L1045.3,462.8 L1051.0,431.0 L1054.7,448.9 L1056.5,441.2 L1059.8,481.9 L1063.1,466.6 L1064.9,492.0 L1066.2,537.7 L1070.0,550.4 L1074.3,608.8 L1076.8,580.9 L1080.1,605.0 L1083.4,569.4 L1086.5,583.4 L1089.5,570.7 L1092.0,629.1 L1095.4,617.7 L1096.6,586.0 L1101.2,578.3 L1103.0,603.7 L1106.8,551.7 L1111.4,568.2 L1114.4,616.4 L1113.9,669.7 L1116.9,673.5 L1120.7,652.0 L1124.6,621.5 L1127.1,635.4 L1128.4,560.6 L1130.9,526.3 L1134.2,540.2 L1138.5,516.1 L1141.8,540.2 L1146.1,502.2 L1149.4,522.5 L1153.7,481.9 L1156.3,532.6 L1159.6,535.2 L1160.0,525.4 L1162.3,610.8 L1163.8,616.1 L1164.8,688.3 L1168.1,689.3 L1167.5,709.8 L1171.8,710.9 L1172.9,695.8 L1175.6,694.7 L1176.1,720.6 L1178.3,686.1 L1179.9,713.0 L1182.6,656.0 L1184.2,713.0 L1186.9,677.5 L1188.5,696.9 L1192.3,723.8 L1192.8,696.9 L1195.5,695.8 L1197.1,721.6 L1199.8,694.7 L1201.4,718.4 L1203.6,673.2 L1206.8,654.9 L1209.5,670.0 L1212.2,723.8 L1214.9,644.1 L1218.1,659.2 L1218.7,718.4 L1222.4,732.4 L1224.6,694.7 L1228.9,678.6 L1231.0,649.5 L1234.3,687.2 L1239.7,642.0 L1245.0,682.9 L1246.1,617.2 L1248.9,575.0 L1251.8,588.9 L1254.2,576.2 L1256.9,585.4 L1259.2,569.2 L1261.5,569.2 L1262.7,516.2 L1266.2,509.2 L1270.3,512.7 L1273.1,487.3 L1275.4,502.3 L1277.2,493.1 L1280.5,520.8 L1283.5,510.4 L1286.5,502.3 L1288.1,519.6 L1291.1,503.5 L1293.4,515.0 L1297.3,511.5 L1300.8,535.8 L1303.1,519.6 L1306.5,547.3 L1309.5,549.6 L1311.9,503.5 L1316.5,505.8 L1319.2,545.0 L1322.7,539.2 L1325.7,512.7 L1328.0,534.6 L1330.0,532.3 L1332.3,453.8 L1335.1,460.8 L1338.1,481.5 L1338.8,578.5 L1341.5,585.4 L1345.0,564.6 L1348.5,547.3 L1351.9,558.9 L1354.9,547.3 L1357.2,553.1 L1360.0,587.7 L1364.2,550.8 L1367.4,579.6 L1371.5,537.0 L1375.0,527.7 L1378.5,525.4 L1380.8,510.4 L1383.5,521.9 L1385.8,485.0 L1388.8,500.0 L1392.3,564.6 L1394.2,542.7 L1396.9,543.8 L1396.9,599.2 L1400.4,612.0 L1404.3,599.2 L1407.3,615.4 L1411.2,593.5 L1414.2,605.0 L1417.2,599.2 L1419.5,643.1 L1422.8,647.7 L1425.1,613.1 L1428.1,627.0 L1430.4,587.7 L1433.9,576.2 L1436.2,553.1 L1438.5,543.8 L1441.9,542.7 L1443.1,580.8 L1444.9,564.6 L1445.4,617.7 L1447.7,640.8 L1450.0,717.0 L1454.6,696.2 L1456.5,684.6 L1460.4,677.7 L1462.7,689.2 L1466.2,696.2 L1468.5,622.3 L1470.3,608.5 L1473.1,640.8 L1475.4,667.3 L1477.7,608.5 L1480.0,606.2 L1482.3,624.6 L1484.2,614.2 L1486.5,668.5 L1489.7,654.6 L1493.4,685.8 L1495.7,665.0 L1499.6,667.3 L1500.0,666.0 L1502.2,697.4 L1504.0,708.5 L1507.0,676.2 L1510.1,697.4 L1512.0,727.9 L1514.4,693.7 L1517.5,717.7 L1519.9,683.6 L1523.0,656.8 L1525.8,678.0 L1529.5,676.2 L1531.4,636.5 L1534.1,629.2 L1536.9,645.8 L1539.7,623.6 L1542.1,650.4 L1544.3,642.0 L1545.8,668.0 L1548.3,647.6 L1549.4,618.1 L1550.7,651.3 L1550.7,573.8 L1552.0,525.8 L1555.4,535.0 L1558.1,588.6 L1560.0,577.8 L1561.7,562.8 L1563.2,545.5 L1566.5,560.6 L1567.5,525.0 L1570.8,528.3 L1571.8,442.1 L1574.6,435.7 L1577.2,454.0 L1579.4,472.3 L1582.6,466.9 L1586.9,394.8 L1589.1,407.7 L1590.6,434.6 L1592.3,407.7 L1594.0,435.7 L1596.6,420.6 L1598.3,406.6 L1601.4,401.2 L1604.2,402.3 L1605.2,460.5 L1608.5,445.4 L1611.7,463.7 L1614.3,487.4 L1617.0,478.8 L1619.2,455.1 L1622.5,431.4 L1625.7,442.1 L1626.3,480.9 L1628.9,483.1 L1631.5,558.5 L1634.3,511.1 L1637.1,468.0 L1639.7,442.1 L1641.8,463.7 L1645.1,468.0 L1647.9,483.1 L1649.4,416.3 L1652.6,405.5 L1655.8,435.7 L1656.9,396.9 L1660.2,403.4 L1660.8,347.4 L1663.8,329.1 L1666.6,345.2 L1668.8,360.3 L1670.9,364.6 L1673.1,382.9 L1676.7,363.5 L1678.5,405.5 L1681.7,392.6 L1683.8,443.2 L1688.2,408.8 L1690.3,448.6 L1691.5,449.0 L1693.0,404.0 L1694.5,402.0 L1697.5,382.0 L1700.0,395.0 L1703.0,394.0 L1705.0,382.0 L1708.0,406.0 L1710.0,406.0 L1712.0,374.0 L1714.0,390.0 L1715.0,435.0 L1717.0,420.0 L1719.0,391.0 L1722.0,395.0 L1722.5,424.0 L1726.0,426.0 L1728.0,427.0 L1730.0,457.0 L1732.0,417.0 L1734.0,439.0 L1737.0,439.0 L1739.0,398.0 L1742.0,395.0 L1744.0,427.0 L1746.0,428.0 L1748.0,400.0 L1751.0,400.0 L1753.0,397.0 L1755.0,443.0 L1759.0,444.0 L1760.0,427.0 L1763.0,449.0 L1766.0,417.0 L1769.0,400.0 L1771.0,416.0 L1773.0,399.0 L1775.5,417.0 L1777.0,395.0 L1780.5,408.0 L1782.5,372.0 L1785.0,386.0 L1788.0,397.0 L1789.0,379.0 L1791.0,378.0 L1793.7,358.3 L1794.5,341.4 L1797.0,350.3 L1797.8,261.4 L1800.2,277.6 L1801.0,253.4 L1803.4,245.3 L1805.8,259.0 L1808.3,259.8 L1809.9,240.4 L1812.3,245.3 L1815.9,267.9 L1818.8,251.7 L1821.2,252.6 L1823.3,241.2 L1826.0,251.7 L1828.5,258.2 L1831.4,242.9 L1834.9,247.7 L1835.7,287.3 L1839.8,301.8 L1843.3,255.8 L1845.4,266.3 L1848.6,271.1 L1850.3,259.8 L1854.3,230.0 L1857.5,255.0 L1860.0,242.0 L1862.4,174.2 L1865.6,164.5 L1867.2,182.3 L1871.2,180.7 L1874.5,162.1 L1877.7,177.5 L1880.9,167.0 L1882.6,198.4 L1885.8,196.8 L1887.4,295.3 L1889.8,337.3 L1891.4,297.0 L1894.7,305.0 L1897.1,350.3 L1899.2,324.4" stroke="#ef5350" clip-path="url(#cbot)"/>
</g>
<line x1="18" y1="618.0" x2="1907" y2="618.0" stroke="#7d8899" stroke-width="2" stroke-dasharray="2 6.881" stroke-dashoffset="0.381"/>
<line x1="18" y1="325.0" x2="1907" y2="325.0" stroke="#26a69a" stroke-width="2" stroke-dasharray="2 3.3286" stroke-dashoffset="0.369"/>
<line x1="18" y1="1189" x2="2030" y2="1189" stroke="#787878" stroke-width="2"/>
<line x1="1907" y1="48" x2="1907" y2="1237" stroke="#787878" stroke-width="2"/>
<g transform="translate(17.9,1259.3)" fill="#d1d4dc">
<path d="M0,0 H13.4 V17.1 H6.5 V6.5 H0 Z"/>
<circle cx="19" cy="3.7" r="3.6"/>
<path d="M25,0 H34.8 L27.8,17.1 H19.5 Z"/>
</g>
</svg>
<div class="usd"></div>
<div class="pbox"></div>
<div class="t" style="left:18.50px;top:16.60px;font-size:22.0px;transform:scaleX(0.9565);">ZyCrypto published on TradingView.com, Sep 07, 2021 13:47 UTC+1</div>
<div class="t" style="left:30.59px;top:64.80px;font-size:22.4px;transform:scaleX(0.9569);">Bitcoin / U.S. Dollar, 30, BITSTAMP</div>
<div class="t" style="left:381.59px;top:64.80px;font-size:22.0px;transform:scaleX(0.9056);color:#26a69a;">50982.41</div>
<div class="t" style="left:480.26px;top:64.80px;font-size:22.0px;transform:scaleX(0.9397);color:#26a69a;">+253.57</div>
<div class="t" style="left:561.10px;top:64.80px;font-size:22.0px;transform:scaleX(0.8977);color:#26a69a;">(+0.50%)</div>
<div class="t" style="left:1924.70px;top:1151.50px;font-size:22.0px;transform:scaleX(0.9264);">42000.00</div>
<div class="t" style="left:1924.70px;top:1058.30px;font-size:22.0px;transform:scaleX(0.9264);">43000.00</div>
<div class="t" style="left:1924.70px;top:965.00px;font-size:22.0px;transform:scaleX(0.9264);">44000.00</div>
<div class="t" style="left:1924.70px;top:871.90px;font-size:22.0px;transform:scaleX(0.9264);">45000.00</div>
<div class="t" style="left:1924.70px;top:778.50px;font-size:22.0px;transform:scaleX(0.9264);">46000.00</div>
<div class="t" style="left:1924.70px;top:685.30px;font-size:22.0px;transform:scaleX(0.9264);">47000.00</div>
<div class="t" style="left:1924.70px;top:592.20px;font-size:22.0px;transform:scaleX(0.9264);">48000.00</div>
<div class="t" style="left:1924.70px;top:498.90px;font-size:22.0px;transform:scaleX(0.9264);">49000.00</div>
<div class="t" style="left:1923.76px;top:405.80px;font-size:22.0px;transform:scaleX(0.9367);">50000.00</div>
<div class="t" style="left:1923.76px;top:220.00px;font-size:22.0px;transform:scaleX(0.9367);">52000.00</div>
<div class="t" style="left:1923.76px;top:126.90px;font-size:22.0px;transform:scaleX(0.9367);">53000.00</div>
<div class="t" style="left:133.73px;top:1203.80px;font-size:21.3px;transform:scaleX(1.0700);">9</div>
<div class="t" style="left:307.67px;top:1203.80px;font-size:21.3px;transform:scaleX(0.9318);">12</div>
<div class="t" style="left:545.62px;top:1203.80px;font-size:21.3px;transform:scaleX(0.9318);">16</div>
<div class="t" style="left:723.82px;top:1203.80px;font-size:21.3px;transform:scaleX(0.9318);">19</div>
<div class="t" style="left:962.02px;top:1203.80px;font-size:21.3px;transform:scaleX(0.9318);">23</div>
<div class="t" style="left:1140.62px;top:1203.80px;font-size:21.3px;transform:scaleX(0.9318);">26</div>
<div class="t" style="left:1319.02px;top:1203.80px;font-size:21.3px;transform:scaleX(0.9318);">29</div>
<div class="t" style="left:1490.87px;top:1203.80px;font-size:21.3px;transform:scaleX(0.9297);font-weight:700;">Sep</div>
<div class="t" style="left:1632.64px;top:1203.80px;font-size:21.3px;transform:scaleX(0.9615);">12:00</div>
<div class="t" style="left:1800.29px;top:1203.80px;font-size:21.3px;transform:scaleX(0.9762);">6</div>
<div class="t" style="left:1923.73px;top:315.90px;font-size:20.7px;transform:scaleX(0.9729);color:#ffffff;">50982.41</div>
<div class="t" style="left:1923.71px;top:339.80px;font-size:21.1px;transform:scaleX(0.9863);color:#e0f2f0;">12:32</div>
<div class="t" style="left:1949.78px;top:62.70px;font-size:21.2px;transform:scaleX(0.8233);-webkit-text-stroke:0.8px currentColor;">USD</div>
<div class="t" style="left:58.70px;top:1256.90px;font-size:22.9px;transform:scaleX(1.0159);-webkit-text-stroke:0.9px currentColor;">TradingView</div>
</body></html>
